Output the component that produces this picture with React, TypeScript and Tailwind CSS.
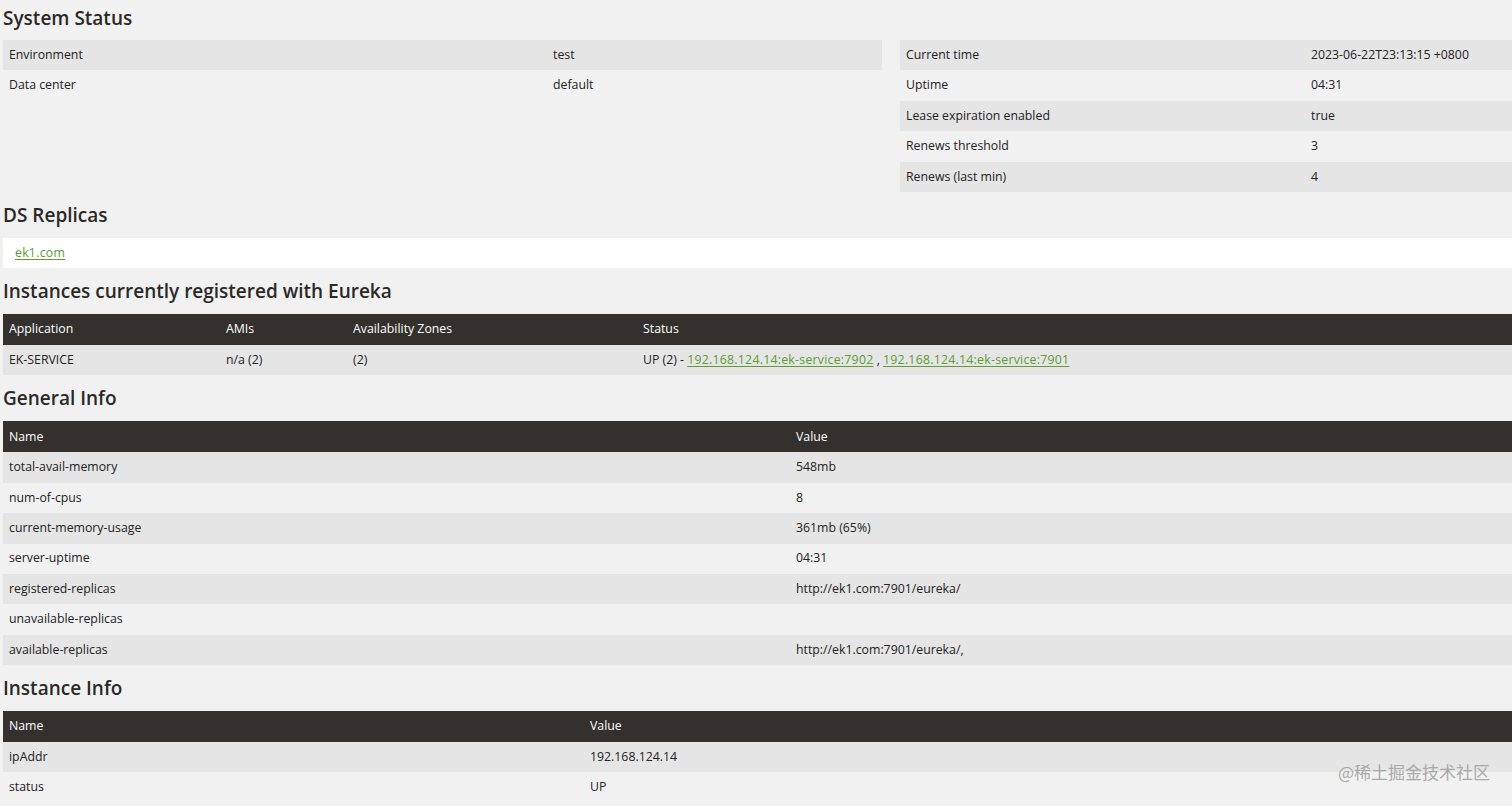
import React from "react";

type Row = [string, React.ReactNode];

const systemLeft: Row[] = [
  ["Environment", "test"],
  ["Data center", "default"],
];

const systemRight: Row[] = [
  ["Current time", "2023-06-22T23:13:15 +0800"],
  ["Uptime", "04:31"],
  ["Lease expiration enabled", "true"],
  ["Renews threshold", "3"],
  ["Renews (last min)", "4"],
];

const generalInfo: Row[] = [
  ["total-avail-memory", "548mb"],
  ["num-of-cpus", "8"],
  ["current-memory-usage", "361mb (65%)"],
  ["server-uptime", "04:31"],
  ["registered-replicas", "http://ek1.com:7901/eureka/"],
  ["unavailable-replicas", ""],
  ["available-replicas", "http://ek1.com:7901/eureka/,"],
];

const instanceInfo: Row[] = [
  ["ipAddr", "192.168.124.14"],
  ["status", "UP"],
];

function Heading({ children, first }: { children: React.ReactNode; first?: boolean }) {
  return (
    <h2
      className={`${first ? "pt-[5px] pb-[9px]" : "py-[10px]"} text-[19px] leading-[26px] font-semibold text-[#2b2927]`}
      style={{ fontFamily: '"Open Sans", "Liberation Sans", sans-serif' }}
    >
      {children}
    </h2>
  );
}

function KvTable({ rows, keyWidth }: { rows: Row[]; keyWidth: string }) {
  return (
    <div className="flex flex-col">
      {rows.map(([k, v], i) => (
        <div key={k} className={`flex h-[30.4px] items-center ${i % 2 === 0 ? "bg-[#e5e5e5]" : ""}`}>
          <div className={`${keyWidth} shrink-0 pl-[6px]`}>{k}</div>
          <div>{v}</div>
        </div>
      ))}
    </div>
  );
}

function DarkHeader({ cols }: { cols: [string, string][] }) {
  return (
    <div className="flex h-[31px] items-center bg-[#33302d] text-white">
      {cols.map(([label, w]) => (
        <div key={label} className={`${w} shrink-0 pl-[6px]`}>
          {label}
        </div>
      ))}
    </div>
  );
}

function Link({ children }: { children: React.ReactNode }) {
  return <a className="text-[#5c9c31] underline underline-offset-2 tracking-[0.25px]">{children}</a>;
}

export default function App() {
  return (
    <div
      className="relative min-h-[806px] bg-[#f1f1f1] pl-[3px] text-[12.3px] text-[#222] overflow-hidden"
      style={{ fontFamily: '"Open Sans", "Liberation Sans", sans-serif' }}
    >
      <Heading first>System Status</Heading>
      <div className="flex gap-[18px]">
        <div className="w-[879px] shrink-0">
          <KvTable rows={systemLeft} keyWidth="w-[550px]" />
        </div>
        <div className="flex-1">
          <KvTable rows={systemRight} keyWidth="w-[411px]" />
        </div>
      </div>

      <Heading>DS Replicas</Heading>
      <div className="flex h-[30px] items-center bg-white pl-[12px]">
        <Link>ek1.com</Link>
      </div>

      <Heading>Instances currently registered with Eureka</Heading>
      <DarkHeader
        cols={[
          ["Application", "w-[217px]"],
          ["AMIs", "w-[127px]"],
          ["Availability Zones", "w-[290px]"],
          ["Status", "flex-1"],
        ]}
      />
      <div className="flex h-[30.4px] items-center bg-[#e5e5e5]">
        <div className="w-[217px] shrink-0 pl-[6px]">EK-SERVICE</div>
        <div className="w-[127px] shrink-0 pl-[6px]">n/a (2)</div>
        <div className="w-[290px] shrink-0 pl-[6px]">(2)</div>
        <div className="pl-[6px]">
          UP (2) - <Link>192.168.124.14:ek-service:7902</Link> , <Link>192.168.124.14:ek-service:7901</Link>
        </div>
      </div>

      <Heading>General Info</Heading>
      <DarkHeader
        cols={[
          ["Name", "w-[787px]"],
          ["Value", "flex-1"],
        ]}
      />
      <div className="flex flex-col">
        {generalInfo.map(([k, v], i) => (
          <div key={k} className={`flex h-[30.4px] items-center ${i % 2 === 0 ? "bg-[#e5e5e5]" : ""}`}>
            <div className="w-[787px] shrink-0 pl-[6px]">{k}</div>
            <div className="pl-[6px]">{v}</div>
          </div>
        ))}
      </div>

      <Heading>Instance Info</Heading>
      <DarkHeader
        cols={[
          ["Name", "w-[581px]"],
          ["Value", "flex-1"],
        ]}
      />
      <div className="flex flex-col">
        {instanceInfo.map(([k, v], i) => (
          <div key={k} className={`flex h-[30.4px] items-center ${i % 2 === 0 ? "bg-[#e5e5e5]" : ""}`}>
            <div className="w-[581px] shrink-0 pl-[6px]">{k}</div>
            <div className="pl-[6px]">{v}</div>
          </div>
        ))}
      </div>

      <div
        className="absolute right-[22px] bottom-[22px] text-[17px] text-[#9a9a9a] opacity-80"
        style={{ fontFamily: '"Noto Sans CJK SC", "Liberation Sans", sans-serif' }}
      >
        @稀土掘金技术社区
      </div>
    </div>
  );
}
